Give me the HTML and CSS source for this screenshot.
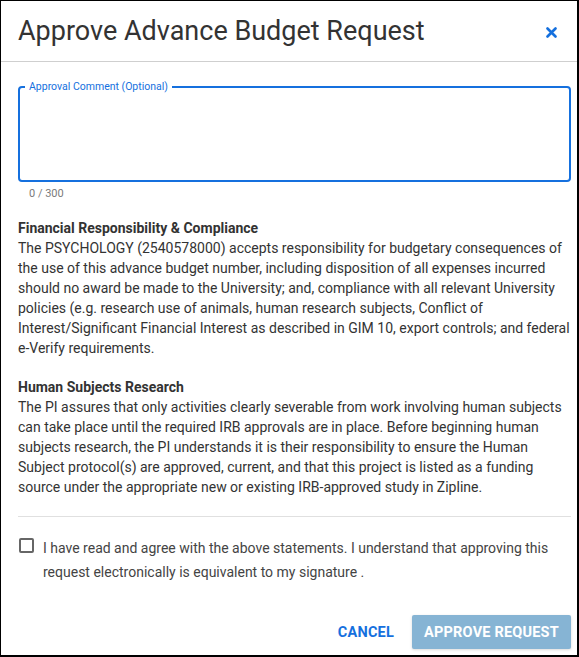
FILE: index.html
```html
<!DOCTYPE html>
<html lang="en">
<head>
<meta charset="utf-8">
<title>Approve Advance Budget Request</title>
<link rel="stylesheet" href="styles.css">
</head>
<body>
<div class="dialog">
  <header class="dialog-header">
    <h1 class="dialog-title">Approve Advance Budget Request</h1>
    <button class="close-btn" aria-label="Close">
      <svg width="11" height="11" viewBox="0 0 11 11"><path d="M1.5 1.5 L9.5 9.5 M9.5 1.5 L1.5 9.5" stroke="#1570de" stroke-width="2.6" stroke-linecap="round" fill="none"/></svg>
    </button>
  </header>
  <div class="dialog-body">
    <div class="field">
      <span class="field-label">Approval Comment (Optional)</span>
    </div>
    <div class="counter">0 / 300</div>

    <section class="section">
      <h2 class="section-title">Financial Responsibility &amp; Compliance</h2>
      <p class="section-text">The PSYCHOLOGY (2540578000) accepts responsibility for budgetary consequences of the use of this advance budget number, including disposition of all expenses incurred should no award be made to the University; and, compliance with all relevant University policies (e.g. research use of animals, human research subjects, Conflict of Interest/Significant Financial Interest as described in GIM 10, export controls; and federal e-Verify requirements.</p>
    </section>

    <section class="section section-gap">
      <h2 class="section-title">Human Subjects Research</h2>
      <p class="section-text">The PI assures that only activities clearly severable from work involving human subjects can take place until the required IRB approvals are in place. Before beginning human subjects research, the PI understands it is their responsibility to ensure the Human Subject protocol(s) are approved, current, and that this project is listed as a funding source under the appropriate new or existing IRB-approved study in Zipline.</p>
    </section>

    <hr class="divider">

    <label class="agree">
      <span class="checkbox"></span>
      <span class="agree-text">I have read and agree with the above statements. I understand that approving this request electronically is equivalent to my signature .</span>
    </label>

    <div class="actions">
      <button class="btn-cancel">CANCEL</button>
      <button class="btn-approve">APPROVE REQUEST</button>
    </div>
  </div>
</div>
</body>
</html>
```

FILE: styles.css
```css
html, body {
  margin: 0;
  padding: 0;
  background: #fff;
}

.dialog {
  box-sizing: border-box;
  width: 579px;
  height: 657px;
  border-style: solid;
  border-color: #000;
  border-width: 1px 2px 2px 1px;
  background: #fff;
  font-family: Roboto, "Liberation Sans", Arial, sans-serif;
  color: #333;
  overflow: hidden;
}

.dialog-header {
  height: 60px;
  display: flex;
  align-items: center;
  justify-content: space-between;
  padding: 0 20px 0 17px;
  border-bottom: 1px solid #cfcfcf;
}

.dialog-title {
  margin: 0;
  font-size: 27px;
  font-weight: 400;
  line-height: 60px;
  color: #333;
}

.close-btn {
  border: 0;
  background: transparent;
  padding: 0;
  margin-top: 2px;
  width: 11px;
  height: 11px;
  display: flex;
  cursor: pointer;
}

.dialog-body {
  padding: 0 6px 0 17px;
}

.field {
  position: relative;
  box-sizing: border-box;
  height: 96px;
  margin-top: 24px;
  border: 2px solid #1570de;
  border-radius: 4px;
}

.field-label {
  position: absolute;
  top: -8px;
  left: 5px;
  padding: 0 4px;
  background: #fff;
  font-size: 10.5px;
  line-height: 13px;
  color: #1570de;
}

.counter {
  margin-top: 5px;
  padding-left: 11px;
  font-size: 11px;
  line-height: 14px;
  color: #7a7a7a;
}

.section {
  margin-top: 17px;
}

.section-gap {
  margin-top: 19px;
}

.section-title {
  margin: 0;
  font-size: 14px;
  font-weight: 700;
  line-height: 20px;
  color: #333;
}

.section-text {
  margin: 0;
  font-size: 14px;
  line-height: 20px;
  color: #333;
}

.divider {
  margin: 19px 0 0;
  border: 0;
  border-top: 1px solid #e0e0e0;
  height: 0;
}

.agree {
  display: flex;
  align-items: flex-start;
  gap: 9px;
  margin-top: 19px;
}

.checkbox {
  flex: none;
  box-sizing: border-box;
  width: 15px;
  height: 15px;
  margin: 2px 0 0 1px;
  border: 2px solid #666;
  border-radius: 2px;
}

.agree-text {
  font-size: 14px;
  line-height: 24px;
  color: #444;
}

.actions {
  display: flex;
  justify-content: flex-end;
  align-items: center;
  gap: 10px;
  margin-top: 31px;
}

.btn-cancel {
  border: 0;
  background: transparent;
  padding: 0 8px;
  height: 34px;
  font-family: Roboto, "Liberation Sans", Arial, sans-serif;
  font-size: 14.5px;
  font-weight: 700;
  letter-spacing: 0.2px;
  color: #1570de;
  cursor: pointer;
}

.btn-approve {
  border: 0;
  border-radius: 2px;
  background: #86b4d4;
  padding: 0;
  width: 159px;
  height: 34px;
  font-family: Roboto, "Liberation Sans", Arial, sans-serif;
  font-size: 14.5px;
  font-weight: 700;
  letter-spacing: 0.2px;
  color: #fff;
  box-shadow: 0 1px 3px rgba(0,0,0,0.15);
}
```
